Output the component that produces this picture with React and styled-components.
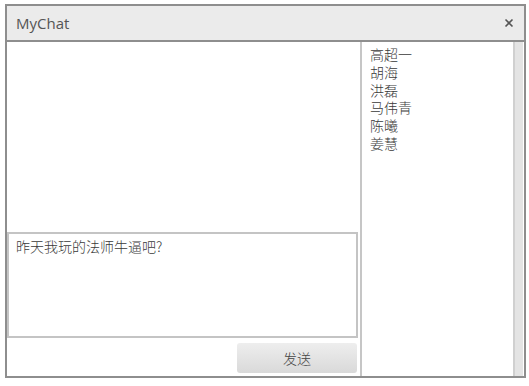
import styled, { createGlobalStyle } from "styled-components";

const GlobalStyle = createGlobalStyle`
  html, body {
    margin: 0;
    padding: 0;
    background: #ffffff;
  }
  body {
    font-family: "Open Sans", "Noto Sans CJK SC", sans-serif;
  }
`;

const StyledWindow = styled.div`
  box-sizing: border-box;
  width: 521px;
  height: 374px;
  margin: 4px 0 0 5px;
  border: 2px solid #8e8e8e;
  display: flex;
  flex-direction: column;
  background: #fff;
`;

const TitleBar = styled.header`
  height: 34px;
  flex: none;
  display: flex;
  align-items: center;
  justify-content: space-between;
  padding: 0 10px 0 9px;
  background: #ebebeb;
  border-bottom: 2px solid #8e8e8e;
  .title {
    font-size: 15px;
    color: #555;
  }
  .close {
    display: flex;
    width: 10px;
    height: 10px;
  }
`;

const Body = styled.div`
  flex: 1;
  display: flex;
  min-height: 0;
`;

const ChatPane = styled.section`
  width: 353px;
  display: flex;
  flex-direction: column;
  border-right: 2px solid #c6c6c6;
  .messages {
    flex: 1;
  }
`;

const Input = styled.div`
  box-sizing: border-box;
  width: 351px;
  height: 106px;
  border: 2px solid #c4c4c4;
  padding: 3px 7px;
  font-family: "Noto Sans CJK SC", sans-serif;
  font-weight: 300;
  font-size: 14px;
  line-height: 18px;
  color: #3a3a3a;
`;

const Footer = styled.div`
  height: 38px;
  display: flex;
  justify-content: flex-end;
  align-items: flex-start;
  padding: 5px 3px 0 0;
  box-sizing: border-box;
`;

const SendButton = styled.button`
  width: 120px;
  height: 30px;
  border: none;
  border-radius: 3px;
  background: linear-gradient(#eeeeee, #d9d9d9);
  font-family: "Noto Sans CJK SC", sans-serif;
  font-weight: 300;
  font-size: 14px;
  color: #444;
  padding: 0;
`;

const ListPane = styled.aside`
  flex: 1;
  display: flex;
  .names {
    flex: 1;
    padding: 4px 8px;
    font-family: "Noto Sans CJK SC", sans-serif;
    font-weight: 300;
    font-size: 14px;
    line-height: 17.8px;
    color: #3a3a3a;
  }
`;

const ScrollTrack = styled.div`
  width: 8px;
  background: #e4e4e4;
  border-left: 2px solid #d0d0d0;
  margin-right: 1px;
`;

const users = ["高超一", "胡海", "洪磊", "马伟青", "陈曦", "姜慧"];

export default function App() {
  return (
    <>
      <GlobalStyle />
      <StyledWindow>
        <TitleBar>
          <span className="title">MyChat</span>
          <svg className="close" viewBox="0 0 10 10">
            <path d="M1.5 1.5 L8.5 8.5 M8.5 1.5 L1.5 8.5" stroke="#555" strokeWidth="1.6" />
          </svg>
        </TitleBar>
        <Body>
          <ChatPane>
            <div className="messages" />
            <Input>昨天我玩的法师牛逼吧?</Input>
            <Footer>
              <SendButton>发送</SendButton>
            </Footer>
          </ChatPane>
          <ListPane>
            <div className="names">
              {users.map((name) => (
                <div key={name}>{name}</div>
              ))}
            </div>
            <ScrollTrack />
          </ListPane>
        </Body>
      </StyledWindow>
    </>
  );
}
